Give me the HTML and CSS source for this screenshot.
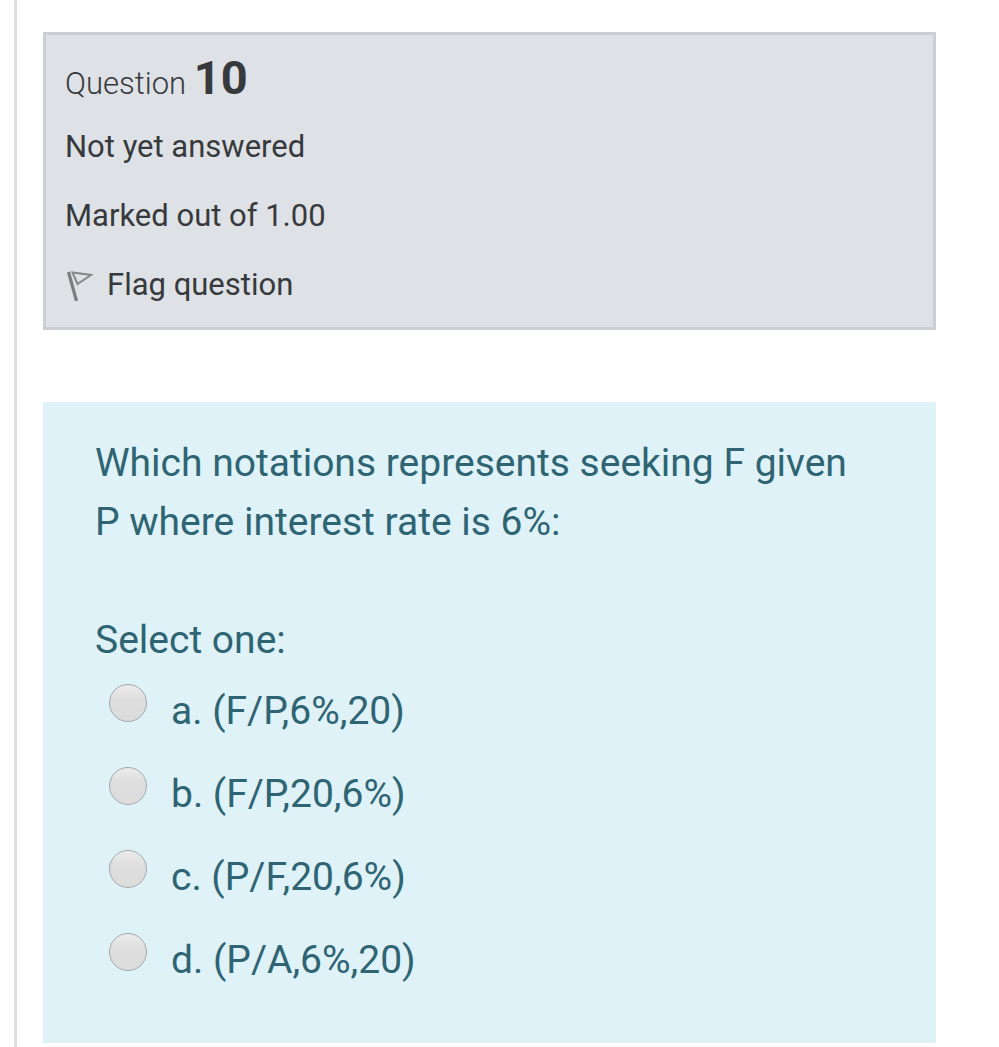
FILE: index.html
```html
<!DOCTYPE html>
<html lang="en">
<head>
    <meta charset="UTF-8">
    <meta name="viewport" content="width=device-width, initial-scale=1.0">
    <title>Question 10</title>
    <link rel="stylesheet" href="styles.css">
</head>
<body>
    <main class="quiz">
        <section class="info">
            <h1 class="number">Question <span class="qno">10</span></h1>
            <div class="state">Not yet answered</div>
            <div class="grade">Marked out of 1.00</div>
            <button type="button" class="flag">
                <svg class="flag-icon" viewBox="0 0 30 32" aria-hidden="true">
                    <path d="M3.5 3 L11.5 32" fill="none" stroke="#7c7d7f" stroke-width="3.2"/>
                    <path d="M7.5 3.5 L26 6 L12.5 15 Z" fill="none" stroke="#858688" stroke-width="2"/>
                </svg>
                Flag question
            </button>
        </section>

        <form class="question">
            <p class="question-text">Which notations represents seeking F given P where interest rate is 6%:</p>
            <fieldset class="answers">
                <legend>Select one:</legend>
                <div class="option">
                    <input type="radio" name="answer" id="answer-a" value="a">
                    <label for="answer-a">a. (F/P,6%,20)</label>
                </div>
                <div class="option">
                    <input type="radio" name="answer" id="answer-b" value="b">
                    <label for="answer-b">b. (F/P,20,6%)</label>
                </div>
                <div class="option">
                    <input type="radio" name="answer" id="answer-c" value="c">
                    <label for="answer-c">c. (P/F,20,6%)</label>
                </div>
                <div class="option">
                    <input type="radio" name="answer" id="answer-d" value="d">
                    <label for="answer-d">d. (P/A,6%,20)</label>
                </div>
            </fieldset>
        </form>
    </main>
</body>
</html>
```
FILE: styles.css
```css
* {
    box-sizing: border-box;
}

body {
    margin: 0;
    background-color: #fff;
    font-family: Roboto, 'Liberation Sans', sans-serif;
    color: #373a3c;
}

.quiz {
    min-height: 100vh;
    margin-left: 14px;
    padding: 32px 63px 4px 26px;
    border-left: 3px solid #dedede;
}

.info {
    display: flex;
    flex-direction: column;
    align-items: flex-start;
    gap: 23px;
    margin-bottom: 72px;
    padding: 19px;
    border: 3px solid #cacfd4;
    background-color: #dee1e5;
    font-size: 31px;
    line-height: 46px;
}

.number {
    margin: 0;
    font-size: 31px;
    font-weight: 300;
    line-height: 31px;
}

.qno {
    font-size: 47px;
    font-weight: 700;
    line-height: 47px;
}

.flag {
    display: flex;
    align-items: center;
    gap: 12px;
    padding: 0;
    border: none;
    background: none;
    color: inherit;
    font: inherit;
    cursor: pointer;
}

.flag-icon {
    width: 30px;
    height: 32px;
}

.question {
    padding: 32px 64px 53px 52px;
    background-color: #def2f8;
    color: #2f6473;
    font-size: 39px;
    line-height: 59px;
}

.question-text {
    margin: 0 0 59px;
}

.answers {
    display: flex;
    flex-direction: column;
    gap: 24px;
    min-width: 0;
    margin: 0;
    padding: 12px 0 0;
    border: none;
}

.answers legend {
    padding: 0;
}

.option {
    display: flex;
    align-items: flex-start;
    gap: 24px;
    padding-left: 14px;
}

/* grey glossy radio */
.option input {
    appearance: none;
    flex: none;
    width: 38px;
    height: 38px;
    margin: 2px 0 0;
    border: 1px solid #a3a9ad;
    border-radius: 50%;
    background: linear-gradient(#ececec, #dedede 40%, #dddcdd);
    cursor: pointer;
}

.option input:checked {
    background: radial-gradient(circle, #555 30%, #dedede 34%);
}
```
